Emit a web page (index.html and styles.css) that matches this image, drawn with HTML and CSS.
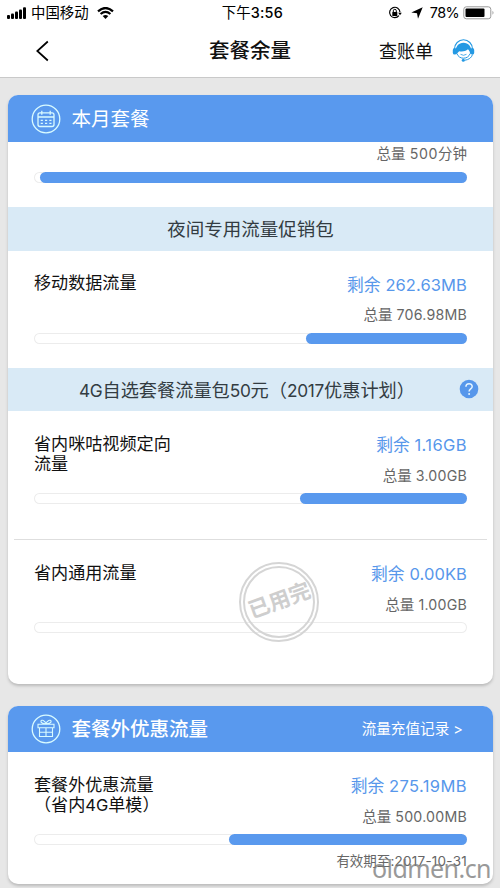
FILE: index.html
```html
<!DOCTYPE html>
<html lang="zh-CN">
<head>
<meta charset="utf-8">
<title>套餐余量</title>
<link rel="stylesheet" href="styles.css">
</head>
<body>
<header class="top">
  <div class="status">
    <div class="carrier">
      <svg width="20" height="12" viewBox="0 0 20 12"><rect x="0" y="8" width="3" height="4" rx="1"/><rect x="4" y="6.5" width="3" height="5.5" rx="1"/><rect x="8" y="4.500" width="3" height="7.500" rx="1"/><rect x="12" y="2.500" width="3" height="9.500" rx="1"/><rect x="16" y="0.300" width="3" height="11.700" rx="1"/></svg>
      <span>中国移动</span>
      <svg class="wifi" width="17" height="12" viewBox="0 0 17 12"><path d="M1 4.300Q8.500-2.300 16 4.300M3.600 7Q8.500 2.800 13.400 7" fill="none" stroke="#000" stroke-width="2.200"/><path d="M5.700 9Q8.500 6.900 11.300 9L8.500 12Z"/></svg>
    </div>
    <div class="clock">下午<span>3:56</span></div>
    <div class="power">
      <svg width="14" height="14" viewBox="0 0 14 14"><path d="M10.900 9.700A5.200 5.200 0 1 1 12 6.300" fill="none" stroke="#000" stroke-width="1.200"/><path d="M10.200 6.800h3.600L12 9.300z"/><rect x="4.300" y="6" width="5" height="4" rx=".5"/><path d="M5.300 6V4.800a1.500 1.500 0 0 1 3 0V6" fill="none" stroke="#000"/></svg>
      <svg class="arrow" width="12" height="12" viewBox="0 0 12 12"><path d="M11.700.3L7 11.800 6 6.200.3 5.600z"/></svg>
      <span>78%</span>
      <svg class="battery" width="32" height="14" viewBox="0 0 32 14"><rect x=".8" y=".8" width="27" height="12" rx="2.500" fill="#fff" stroke="#999"/><rect x="2.500" y="2.500" width="19" height="8.600" rx="1"/><path d="M29.500 4.800q2 2 0 4z" fill="#999"/></svg>
    </div>
  </div>
  <nav class="nav">
    <svg width="13" height="22" viewBox="0 0 13 22"><path d="M11.800 1.500L1.300 11l10.500 9.500" fill="none" stroke="#000" stroke-width="1.700"/></svg>
    <h1>套餐余量</h1>
    <div class="bill"><span>查账单</span>
      <svg width="23" height="23" viewBox="0 0 23 23"><path d="M2.500 10A9 9.200 0 0 1 20.500 10" fill="none" stroke="#2499e3" stroke-width="1.100"/><path d="M3.600 15C1.500 0 21.500 0 19.400 15L18 14.500c.1-1.800-.8-3-2-4.200-2.500 2-5.800 2.600-8.800 1.900-.9 1-1.700 1.700-2.200 2.500z" fill="#2499e3"/><rect x=".8" y="9" width="3.800" height="6.600" rx="1.900" fill="#2499e3"/><rect x="18.400" y="9" width="3.800" height="6.600" rx="1.900" fill="#2499e3"/><path d="M4.800 14.500q2 4.700 6.700 4.700t6.700-4.700M20.500 15.500q-1.500 5-8 5.800" fill="none" stroke="#2499e3" stroke-width="1"/><path d="M8.500 15.300q3 2 6 0" fill="none" stroke="#2499e3" stroke-width=".8"/><circle cx="11.300" cy="21.200" r="1.500" fill="#2499e3"/></svg>
    </div>
  </nav>
</header>

<main>
  <section class="card plan">
    <div class="head">
      <svg width="30" height="30" viewBox="0 0 30 30"><circle cx="15" cy="15" r="13.800"/><rect x="7" y="8.800" width="16" height="13.700" rx="2"/><path d="M7 13h16M10.800 6.700v4M19.200 6.700v4"/><path d="M9.700 16.300h11M9.700 19.400h11" stroke-dasharray="2.200 2.100"/></svg>
      <h2>本月套餐</h2>
    </div>
    <div class="item voice">
      <p class="total">总量 <span>500</span>分钟</p>
      <div class="bar"><i style="width:98.600%"></i></div>
    </div>
    <div class="band">夜间专用流量促销包</div>
    <div class="item">
      <div class="row">
        <p class="name">移动数据流量</p>
        <div class="amount"><p class="left">剩余 <span>262.63MB</span></p><p class="total">总量 <span>706.98MB</span></p></div>
      </div>
      <div class="bar"><i style="width:37.200%"></i></div>
    </div>
    <div class="band"><span class="band-num">4G</span>自选套餐流量包<span class="band-num">50</span>元（<span class="band-num">2017</span>优惠计划）
      <svg class="help" width="20" height="20" viewBox="0 0 20 20"><circle cx="10" cy="10" r="9.300" fill="#5797eb"/><path d="M6.900 7.800c0-4.100 6.300-4.100 6.300-.3 0 2.400-3.100 2.500-3.100 5" fill="none" stroke="#e5f4ff" stroke-width="1.500"/><circle cx="10.100" cy="15" r="1" fill="#e5f4ff"/></svg>
    </div>
    <div class="item migu">
      <div class="row">
        <p class="name">省内咪咕视频定向<br>流量</p>
        <div class="amount"><p class="left wide">剩余 <span>1.16GB</span></p><p class="total">总量 <span>3.00GB</span></p></div>
      </div>
      <div class="bar"><i style="width:38.600%"></i></div>
    </div>
    <div class="item general">
      <div class="row">
        <p class="name">省内通用流量</p>
        <div class="amount"><p class="left">剩余 <span>0.00KB</span></p><p class="total">总量 <span>1.00GB</span></p></div>
      </div>
      <div class="bar"></div>
      <div class="stamp"><span>已用完</span></div>
    </div>
  </section>

  <section class="card extra">
    <div class="head">
      <svg width="30" height="30" viewBox="0 0 30 30"><circle cx="15" cy="15" r="13.800"/><path d="M7 10.200h16v3.500H7zM8.500 13.700h13v8.800h-13zM15 13.700v8.800M8.500 18.300h13M15 9.800C12 9.500 9.500 8.800 9.900 7.200c.5-2 4.200-1 5.100 2.600.9-3.600 4.600-4.600 5.100-2.600.4 1.600-2.100 2.300-5.100 2.600" stroke-width="1.100"/></svg>
      <h2>套餐外优惠流量</h2>
      <a>流量充值记录 &gt;</a>
    </div>
    <div class="item">
      <div class="row">
        <p class="name">套餐外优惠流量<br>（省内<span>4G</span>单模）</p>
        <div class="amount"><p class="left wide">剩余 <span>275.19MB</span></p><p class="total">总量 <span>500.00MB</span></p></div>
      </div>
      <div class="bar"><i style="width:55%"></i></div>
      <p class="valid">有效期至<span>:2017-10-31</span></p>
    </div>
  </section>
</main>
<div class="watermark">oldmen.cn</div>
</body>
</html>
```
FILE: styles.css
```css
* { box-sizing: border-box; margin: 0; padding: 0; }
body {
  position: relative;
  width: 500px;
  height: 888px;
  overflow: hidden;
  background: #e7e7e7;
  color: #111;
  font-family: Inter, "Noto Sans CJK SC", sans-serif;
}
svg { display: block; flex: none; }
p, .head, .band, .nav, .status { white-space: nowrap; }

.top { height: 78px; background: #fff; border-bottom: 1px solid #c9c9c9; }
.status {
  display: grid;
  grid-template-columns: 1fr auto 1fr;
  align-items: center;
  height: 25px;
  padding: 0 5px 0 7px;
  font-size: 14.400px;
  line-height: 24px;
  color: #000;
}
.carrier, .power { display: flex; align-items: center; }
.carrier span { margin-left: 4px; }
.wifi { margin-left: 8px; }
.power { justify-content: flex-end; }
.arrow { margin: 0 7px 0 9px; }
.power span { letter-spacing: -0.600px; }
.battery { margin-left: 4px; }
.clock { padding-left: 3px; }
.clock span { letter-spacing: .3px; font-weight: 500; }
.nav {
  display: grid;
  grid-template-columns: 1fr auto 1fr;
  align-items: center;
  height: 51px;
  padding: 0 25px 0 36px;
}
.nav h1 { font-size: 20.500px; font-weight: 500; line-height: 30px; margin: 1px 0 0 -11px; }
.bill { display: flex; align-items: center; justify-content: flex-end; gap: 19px; font-size: 18px; }
.bill span { line-height: 26px; margin-top: 2px; }
.bill svg { margin-top: -1px; }

main { display: flex; flex-direction: column; gap: 22px; padding: 17px 7px 0 8px; }
.card { background: #fff; border-radius: 10px; box-shadow: 0 2px 3px #bbb; }
.plan { height: 589px; }
.extra { height: 178px; }
.head {
  display: flex;
  align-items: center;
  height: 47px;
  padding: 0 30px 0 23px;
  border-radius: 10px 10px 0 0;
  background: #5999ee;
  color: #fff;
}
.extra .head { height: 46px; }
.head svg { fill: none; stroke: #d9fbff; stroke-width: 1.300; }
.head h2 { margin-left: 10.500px; font-size: 19.500px; font-weight: 500; line-height: 28px; }
.plan .head h2 { font-weight: 400; }
.head a { margin-left: auto; font-size: 14.600px; line-height: 22px; }

.item { height: 117px; padding: 21px 26px 0 26px; }
.row { display: flex; justify-content: space-between; height: 61px; }
.name { font-size: 17.100px; line-height: 20.500px; padding-top: 1.500px; }
.name span { font-size: 16.500px; }
.amount { text-align: right; }
.left { font-size: 16.800px; line-height: 26px; color: #5797eb; }
.left span { letter-spacing: .1px; font-size: 16.500px; }
.left.wide span { letter-spacing: .4px; }
.total { font-size: 14.500px; line-height: 22px; margin-top: 6.500px; color: #666; }
.total span { letter-spacing: .22px; font-size: 14.200px; }
.bar { display: flex; justify-content: flex-end; height: 11px; border-radius: 6px; box-shadow: inset 0 0 0 1px #ececec; }
.bar i { height: 11px; border-radius: 6px; background: #5999ee; }
.voice { height: 65px; padding-top: 1px; }
.voice .total { margin: 0 0 7px; text-align: right; }
.voice .total span { letter-spacing: .6px; }
.migu { height: 129px; position: relative; }
.migu::after { content: ""; position: absolute; left: 6px; right: 6px; bottom: 0; height: 1px; background: #dedede; }
.general { position: relative; }
.band {
  position: relative;
  height: 43.500px;
  background: #d9eaf6;
  color: #333c42;
  font-size: 18.500px;
  line-height: 44px;
  text-align: center;
}
.band:has(.help) { padding-right: 7px; font-size: 18.200px; }
.band-num { font-size: 17.300px; letter-spacing: -.3px; }
.help { position: absolute; right: 14px; top: 11px; }
.stamp {
  position: absolute;
  left: 231px;
  top: 22px;
  display: grid;
  place-items: center;
  width: 80px;
  height: 80px;
  border: 6px double #d5d5d5;
  border-radius: 50%;
  color: #cecece;
  font-size: 21.500px;
  line-height: 26px;
  font-weight: 700;
}
.stamp span { margin: -4px -2px 0; transform: rotate(-20deg); white-space: nowrap; }
.valid { margin-top: 6px; text-align: right; font-size: 13.500px; line-height: 20px; color: #666; }
.valid span { letter-spacing: .25px; }
.watermark {
  position: absolute;
  right: 9px;
  bottom: 5px;
  font: 25px/30px "Noto Sans", sans-serif;
  letter-spacing: -.55px;
  color: #777;
  opacity: .75;
}
```
